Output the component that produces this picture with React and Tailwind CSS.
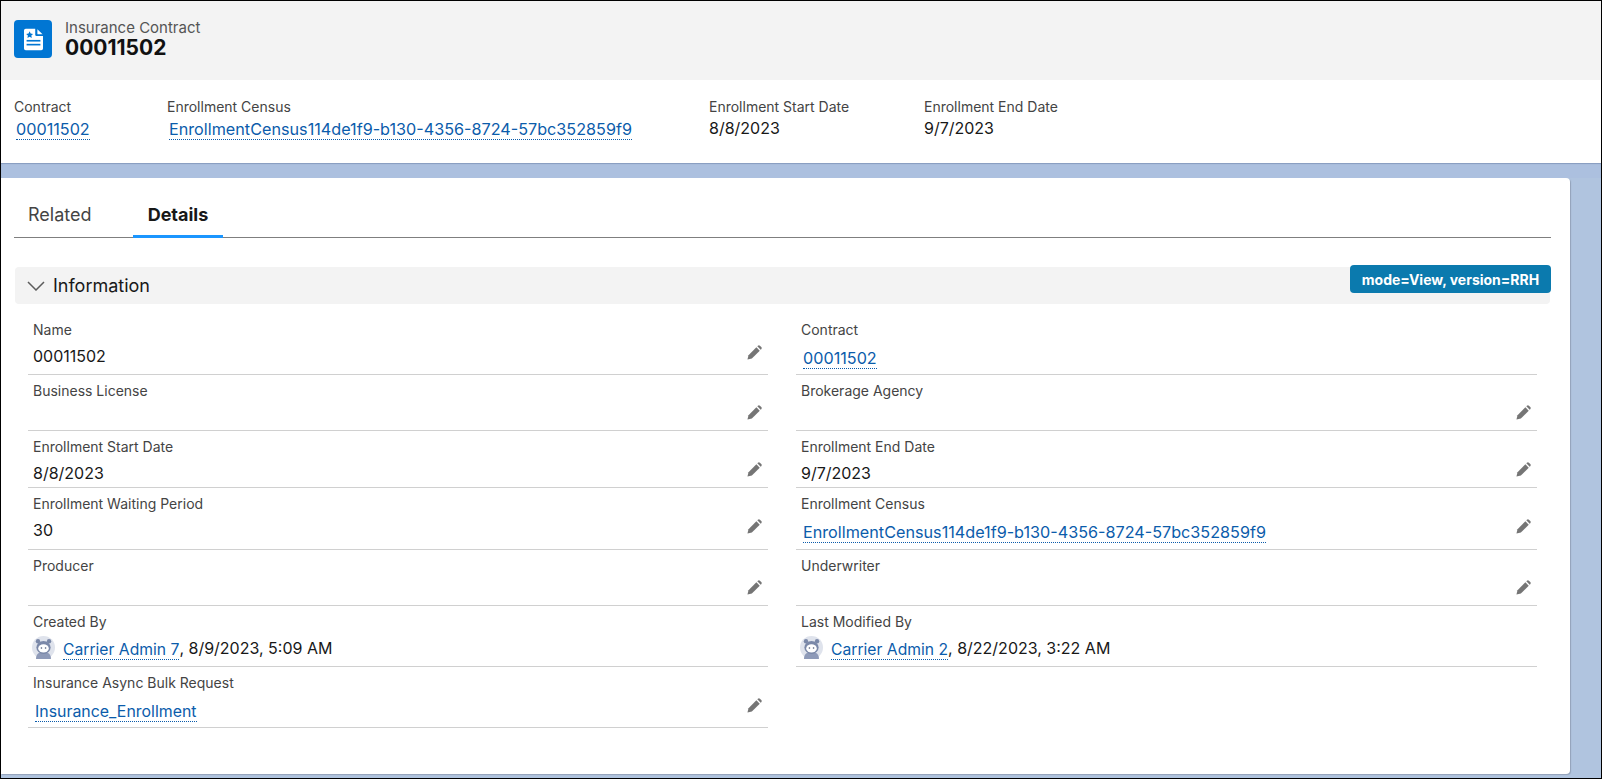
const FONT = "font-['Inter','Liberation_Sans',sans-serif]";

const Link = ({ children, size = "text-[16.2px]" }) => (
  <a className={`text-[#0b5cab] ${size} border-b border-dotted border-[#0b5cab] leading-[19px] inline-block`}>
    {children}
  </a>
);

const Avatar = () => (
  <svg width="23" height="23" viewBox="0 0 20 20" className="flex-shrink-0">
    <circle cx="10" cy="10" r="10" fill="#dfe3ec" />
    <circle cx="5.2" cy="4.6" r="1.9" fill="#7a88a8" />
    <circle cx="14.8" cy="4.6" r="1.9" fill="#7a88a8" />
    <path d="M3.5 20c0-4 2-6 6.500-6s6.500 2 6.500 6z" fill="#8e9ab8" />
    <ellipse cx="10" cy="10" rx="6.200" ry="5.600" fill="#7a88a8" />
    <ellipse cx="10" cy="10.800" rx="4.600" ry="3.600" fill="#ffffff" />
    <circle cx="8.200" cy="10.400" r="0.700" fill="#4d5a78" />
    <circle cx="11.800" cy="10.400" r="0.700" fill="#4d5a78" />
  </svg>
);

const Pencil = ({ className }) => (
  <svg width="15" height="15" viewBox="0 0 16 16" fill="#757575" className={className}>
    <path d="M0.500 15.500l1.100-4.700 8.400-8.400 3.600 3.600-8.400 8.400z" />
    <path d="M11 1.400l.6-.6a1.600 1.600 0 0 1 2.200 0l1.400 1.400a1.600 1.600 0 0 1 0 2.200l-.6.6z" />
  </svg>
);

const Field = ({ label, value, link, linkSize, by, date, editable = true, h, pen = "bottom-[10px]" }) => (
  <div className={`relative border-b border-[#d0d0d0] pl-[5px] pt-[7px] ${h}`}>
    <div className="text-[14px] leading-[18px] text-[#444444]">{label}</div>
    <div className="mt-[7px] text-[16px] leading-[20px] text-[#181818] min-h-[20px]">
      {value}
      {link && <span className="ml-[2px] inline-block mt-[2px]"><Link size={linkSize}>{link}</Link></span>}
      {by && (
        <span className="flex items-center -mt-[3px] -ml-[1px]">
          <Avatar />
          <span className="ml-[8px] mt-[4px]"><Link size="text-[15.7px]">{by}</Link></span>
          <span>, {date}</span>
        </span>
      )}
    </div>
    {editable && <Pencil className={`absolute right-[6px] ${pen}`} />}
  </div>
);

const LEFT = [
  { label: "Name", value: "00011502", h: "h-[61px]", pen: "bottom-[14px]" },
  { label: "Business License", h: "h-[56px]" },
  { label: "Enrollment Start Date", value: "8/8/2023", h: "h-[57px]" },
  { label: "Enrollment Waiting Period", value: "30", h: "h-[62px]", pen: "bottom-[15px]" },
  { label: "Producer", h: "h-[56px]" },
  { label: "Created By", by: "Carrier Admin 7", date: "8/9/2023, 5:09 AM", editable: false, h: "h-[61px]" },
  { label: "Insurance Async Bulk Request", link: "Insurance_Enrollment", linkSize: "text-[15.9px]", h: "h-[61px]", pen: "bottom-[14px]" },
];

const RIGHT = [
  { label: "Contract", link: "00011502", editable: false, h: "h-[61px]" },
  { label: "Brokerage Agency", h: "h-[56px]" },
  { label: "Enrollment End Date", value: "9/7/2023", h: "h-[57px]" },
  { label: "Enrollment Census", link: "EnrollmentCensus114de1f9-b130-4356-8724-57bc352859f9", h: "h-[62px]", pen: "bottom-[15px]" },
  { label: "Underwriter", h: "h-[56px]" },
  { label: "Last Modified By", by: "Carrier Admin 2", date: "8/22/2023, 3:22 AM", editable: false, h: "h-[61px]" },
];

const App = () => {
  return (
    <div className={`${FONT} w-[1602px] h-[779px] overflow-hidden bg-[#b0c4df] border border-black flex flex-col`}>
      <div className="h-[79px] bg-[#f3f3f3] flex items-start pl-[13px] pt-[19px]">
        <div className="w-[38px] h-[38px] rounded-[4px] bg-[#0176d3] flex items-center justify-center">
          <svg width="19" height="23" viewBox="0 0 22 25">
            <path d="M2 0h11v7a1.500 1.500 0 0 0 1.500 1.500H22V23a2 2 0 0 1-2 2H2a2 2 0 0 1-2-2V2a2 2 0 0 1 2-2z" fill="#fff" />
            <path d="M15.500 0.500l6 6h-5a1 1 0 0 1-1-1z" fill="#fff" />
            <path d="M6.500 3l1.200 2.600 2.800.4-2 1.900.5 2.800-2.500-1.350L4 10.700l.5-2.800-2-1.900 2.800-.4z" fill="#0176d3" />
            <rect x="3" y="13" width="16" height="1.900" fill="#0176d3" />
            <rect x="3" y="17.500" width="16" height="1.900" fill="#0176d3" />
          </svg>
        </div>
        <div className="ml-[13px] -mt-[1px]">
          <div className="text-[15px] leading-[17px] text-[#555555]">Insurance Contract</div>
          <div className="text-[21px] leading-[24px] font-bold text-[#111111]">00011502</div>
        </div>
      </div>

      <div className="h-[83px] bg-white flex pl-[13px] pt-[18px] text-[#181818]">
        <div className="w-[153px]">
          <div className="text-[14px] leading-[18px] text-[#444444]">Contract</div>
          <div className="ml-[2px] mt-[1px]"><Link>00011502</Link></div>
        </div>
        <div className="w-[542px]">
          <div className="text-[14px] leading-[18px] text-[#444444]">Enrollment Census</div>
          <div className="ml-[2px] mt-[1px]"><Link>EnrollmentCensus114de1f9-b130-4356-8724-57bc352859f9</Link></div>
        </div>
        <div className="w-[215px]">
          <div className="text-[14px] leading-[18px] text-[#444444]">Enrollment Start Date</div>
          <div className="mt-[2px] text-[16px] leading-[20px]">8/8/2023</div>
        </div>
        <div>
          <div className="text-[14px] leading-[18px] text-[#444444]">Enrollment End Date</div>
          <div className="mt-[2px] text-[16px] leading-[20px]">9/7/2023</div>
        </div>
      </div>

      <div className="h-[15px] bg-[#acc0df] shadow-[inset_0_1px_1px_rgba(90,110,150,0.45)]" />

      <div className="w-[1569px] h-[596px] bg-white rounded-r-[4px] shadow-[1px_1px_1px_rgba(120,130,150,0.5)] pt-[14px]">
        <div className="mx-[13px] w-[1537px] h-[46px] border-b border-[#7f7f7f] flex">
          <div className="pl-[14px] w-[119px] pt-[12px] text-[18px] leading-[22px] text-[#444444]">Related</div>
          <div className="w-[90px] h-[46px] border-b-[3px] border-[#1b96ff] pt-[12px] text-center text-[18px] leading-[22px] font-bold text-[#181818]">Details</div>
        </div>

        <div className="relative mt-[29px] ml-[14px] w-[1535px] h-[37px] bg-[#f3f3f3] rounded-[4px] flex items-center pl-[12px]">
          <svg width="18" height="10" viewBox="0 0 18 10" fill="none" stroke="#5c5c5c" strokeWidth="1.500">
            <path d="M1 1l8 8 8-8" />
          </svg>
          <span className="ml-[8px] text-[18px] text-[#181818]">Information</span>
          <div className="absolute right-[-1px] top-[-2px] w-[201px] h-[28px] rounded-[4px] bg-[#0b7aae] flex items-center justify-center text-white text-[14px] font-bold whitespace-nowrap">
            mode=View, version=RRH
          </div>
        </div>

        <div className="mt-[10px] ml-[27px] flex items-start">
          <div className="w-[740px]">
            {LEFT.map((f) => <Field key={f.label} {...f} />)}
          </div>
          <div className="ml-[28px] w-[741px]">
            {RIGHT.map((f) => <Field key={f.label} {...f} />)}
          </div>
        </div>
      </div>
    </div>
  );
};

export default App;
